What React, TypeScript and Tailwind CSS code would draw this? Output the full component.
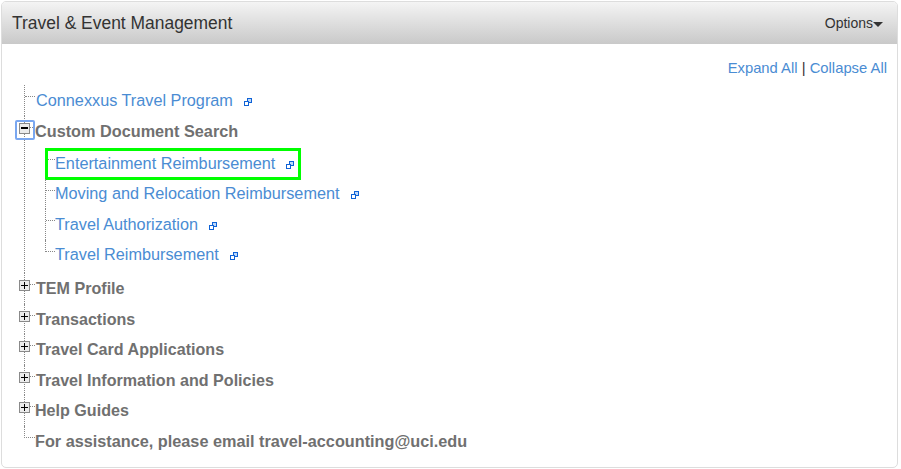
const ExternalIcon = () => (
  <svg viewBox="0 0 8 8" className="mt-1 ml-[11px] h-2 w-2 shrink-0" fill="none" stroke="#0f62d6" strokeWidth="1" shapeRendering="crispEdges">
    <rect x="3.5" y="0.5" width="4" height="4" fill="#bcd8fa" />
    <rect x="0.5" y="3.5" width="4" height="4" fill="#fff" />
  </svg>
);

const Expander = ({ open }: { open?: boolean }) => (
  <span className="absolute top-[7px] -left-[5px] flex h-[11px] w-[11px] items-center justify-center border border-[#8a8a8a] bg-[#ececec]">
    <span className={"relative block w-[7px] bg-black " + (open ? "h-[2px]" : "h-[1px]")}>
      {!open && <span className="absolute -top-[3px] left-[3px] block h-[7px] w-[1px] bg-black" />}
    </span>
  </span>
);

const Row = ({ last, sub, children }: { last?: boolean; sub?: boolean; children: React.ReactNode }) => (
  <li className="relative flex">
    <div className={(sub ? "w-[10px] " : "w-[11px] ") + "shrink-0 " + (last ? "" : "border-l border-dotted border-[#888]")}>
      <div className={"h-[12px] border-b border-dotted border-[#888] " + (last ? "border-l" : "")} />
    </div>
    <div className="min-w-0 flex-1">{children}</div>
  </li>
);

const Link = ({ text }: { text: string }) => (
  <div className="flex h-[30.5px] items-center pb-[1px]">
    <a className="text-[16.25px] leading-[20px] text-[#4a8cd3]">{text}</a>
    <ExternalIcon />
  </div>
);

const Label = ({ text, small }: { text: string; small?: boolean }) => (
  <div className={"flex h-[30.5px] items-center pb-[1px] leading-[20px] font-bold text-[#707070] " + (small ? "text-[16.1px]" : "text-[16.25px]")}>
    {text}
  </div>
);

const groups = ["TEM Profile", "Transactions", "Travel Card Applications", "Travel Information and Policies"];

export default function App() {
  return (
    <div className="h-[469px] w-[901px] bg-white p-[1px] font-['Liberation_Sans',Arial,sans-serif]">
      <div className="h-[467px] w-[897px] overflow-hidden rounded-[5px] border border-[#dddddd]">
        <div className="flex h-[42px] items-center justify-between bg-gradient-to-b from-[#f4f4f4] to-[#c9c9c9] pr-[14px] pl-[10px]">
          <h1 className="text-[17.45px] text-[#333333]">Travel &amp; Event Management</h1>
          <div className="flex items-center text-[14px] text-[#333333]">
            Options
            <span className="mt-[2px] h-0 w-0 border-x-[5px] border-t-[5px] border-x-transparent border-t-[#333333]" />
          </div>
        </div>
        <div className="pr-[10px]">
          <div className="pt-[14px] text-right text-[14.8px] leading-[21px] text-[#4a8cd3]">
            <a>Expand All</a> <span className="text-[#333333]">|</span> <a>Collapse All</a>
          </div>
          <ul className="mt-[6px] ml-[22px]">
            <Row>
              <div className="pl-[1px]">
                <Link text="Connexxus Travel Program" />
              </div>
            </Row>
            <Row>
              <span className="absolute top-[4px] -left-[9px] h-[20px] w-[20px] rounded-[2px] border-2 border-[#7aa7f0]" />
              <Expander open />
              <div className="pt-[1px] pb-[1px]">
                <Label text="Custom Document Search" />
              </div>
              <ul className="mb-[3.25px] ml-[10px]">
                <Row sub>
                  <span className="absolute top-0 left-0 h-[32px] w-[256px] border-[3px] border-[#00ff00]" />
                  <Link text="Entertainment Reimbursement" />
                </Row>
                <Row sub>
                  <Link text="Moving and Relocation Reimbursement" />
                </Row>
                <Row sub>
                  <Link text="Travel Authorization" />
                </Row>
                <Row sub last>
                  <Link text="Travel Reimbursement" />
                </Row>
              </ul>
            </Row>
            {groups.map((g) => (
              <Row key={g}>
                <Expander />
                <div className="pl-[1px]">
                  <Label small text={g} />
                </div>
              </Row>
            ))}
            <Row>
              <Expander />
              <Label small text="Help Guides" />
            </Row>
            <Row last>
              <Label text="For assistance, please email travel-accounting@uci.edu" />
            </Row>
          </ul>
        </div>
      </div>
    </div>
  );
}
